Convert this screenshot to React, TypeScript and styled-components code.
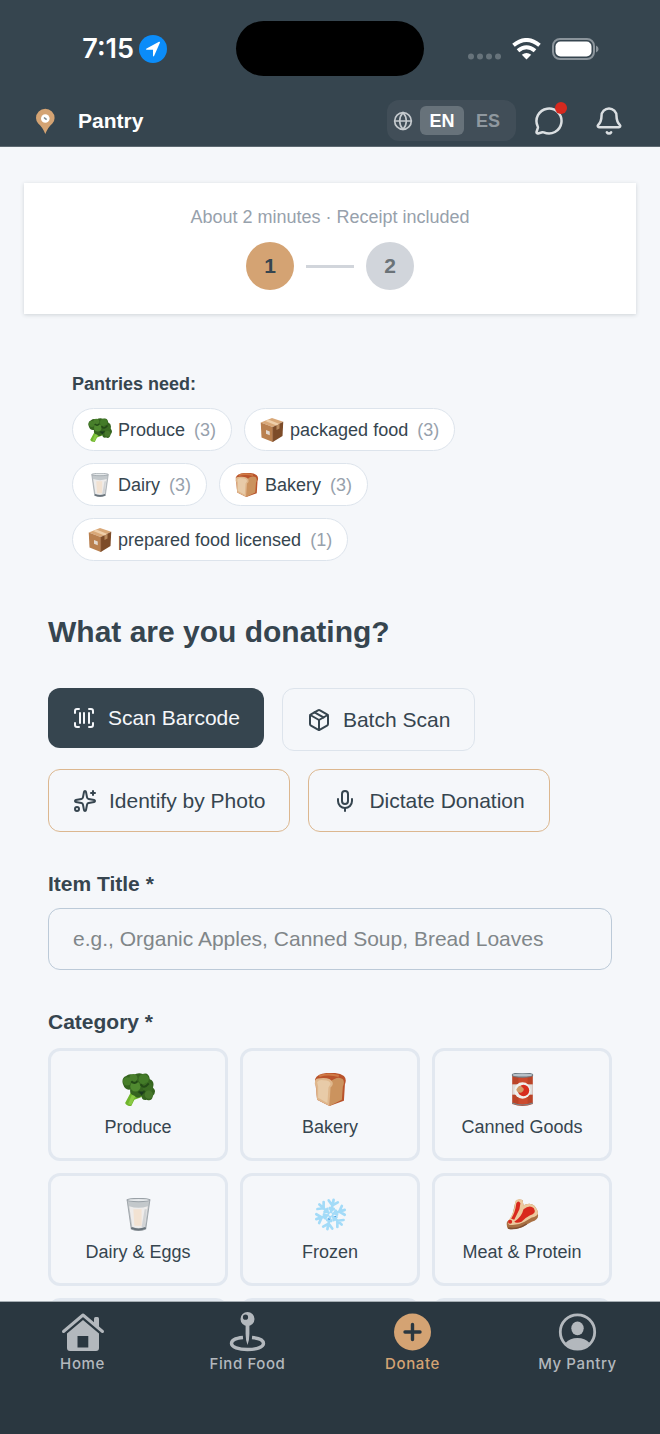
import React from "react";
import styled, { createGlobalStyle, css } from "styled-components";
import { Bell, Globe, MessageCircle, Mic, Package, ScanBarcode, Sparkles } from "lucide-react";

const color = {
  slate: "#36454f",
  slateDark: "#2a3740",
  page: "#f5f7fa",
  tan: "#d4a373",
  line: "#e2e8f0",
  muted: "#97a1ac",
  tab: "#b3b8bd",
};

const GlobalStyle = createGlobalStyle`
  *, *::before, *::after { box-sizing: border-box; }
  body {
    margin: 0;
    background: ${color.page};
    color: ${color.slate};
    font-family: "Liberation Sans", Arial, sans-serif;
    font-size: 18px;
  }
  button, input { font: inherit; color: inherit; }
  button { cursor: pointer; }
  svg { display: block; flex: none; }
`;

const Shell = styled.div`
  display: flex;
  flex-direction: column;
  height: 100vh;
  overflow: hidden;
`;

/* ---------- top bars ---------- */

const Top = styled.header`
  flex: none;
  background: ${color.slate};
  border-bottom: 1px solid #5d6971;
`;

const StatusBar = styled.div`
  display: grid;
  grid-template-columns: 1fr 188px 1fr;
  align-items: center;
  height: 97px;
`;

const StatusLeft = styled.div`
  display: flex;
  align-items: center;
  justify-content: flex-end;
  gap: 5px;
  padding-right: 69px;
  color: #fff;
  font: 600 27px/32px Inter, "Liberation Sans", sans-serif;
`;

const Island = styled.div`
  height: 55px;
  border-radius: 28px;
  background: #000;
`;

const StatusRight = styled.div`
  display: flex;
  align-items: center;
  gap: 11px;
  padding-left: 44px;
`;

const AppBar = styled.div`
  display: flex;
  align-items: center;
  height: 49px;
  padding: 0 30px 2px 24px;
`;

const AppName = styled.h1`
  flex: 1;
  margin: 0 0 0 12px;
  color: #fff;
  font-size: 21px;
  line-height: 28px;
`;

const LanguageSwitch = styled.div`
  display: flex;
  align-items: center;
  height: 41px;
  padding: 6px;
  border-radius: 12px;
  background: #414e58;
  color: #c5cace;
`;

const LanguageButton = styled.button<{ $active?: boolean }>`
  width: 44px;
  height: 29px;
  padding: 0;
  border: 0;
  border-radius: 6px;
  font-weight: 700;
  line-height: 28px;
  background: ${(p) => (p.$active ? "#67727a" : "transparent")};
  color: ${(p) => (p.$active ? "#fff" : "#8f989f")};
  &:first-of-type { margin: 0 2px 0 7px; }
`;

const IconButton = styled.button`
  position: relative;
  display: grid;
  place-items: center;
  width: 42px;
  height: 42px;
  padding: 0;
  border: 0;
  background: none;
  color: #dbdfe2;
  margin-left: 18px;
  ${LanguageSwitch} + & { margin-left: 12px; }
`;

const Badge = styled.span`
  position: absolute;
  top: 2px;
  right: 3px;
  width: 12px;
  height: 12px;
  border-radius: 50%;
  background: #d6291f;
`;

/* ---------- page ---------- */

const Main = styled.main`
  flex: 1;
  min-height: 0;
  overflow-y: auto;
  scrollbar-width: none;
  padding: 36px 24px 24px;
`;

const StepCard = styled.section`
  display: flex;
  flex-direction: column;
  align-items: center;
  gap: 15px;
  padding: 24px;
  background: #fff;
  box-shadow: 0 1px 4px rgba(54, 69, 79, 0.2);
`;

const StepNote = styled.p`
  margin: 0;
  line-height: 20px;
  color: ${color.muted};
`;

const Steps = styled.ol`
  display: flex;
  align-items: center;
  gap: 12px;
  margin: 0;
  padding: 0;
  list-style: none;
`;

const Step = styled.li<{ $active?: boolean }>`
  display: grid;
  place-items: center;
  width: 48px;
  height: 48px;
  border-radius: 50%;
  font-size: 21px;
  font-weight: 700;
  background: ${(p) => (p.$active ? color.tan : "#d1d5db")};
  color: ${(p) => (p.$active ? color.slate : "#6b7378")};
`;

const StepLine = styled.li`
  width: 48px;
  height: 3px;
  background: #d1d5db;
`;

const Needs = styled.section`
  margin: 60px 24px 0 48px;
`;

const NeedsTitle = styled.h2`
  margin: 0 0 14px;
  font-size: 18px;
  line-height: 20px;
`;

const Chips = styled.div`
  display: flex;
  flex-wrap: wrap;
  gap: 12px;
  max-width: 420px;
`;

const Chip = styled.button`
  display: flex;
  align-items: center;
  gap: 6px;
  height: 43px;
  padding: 0 15px;
  border: 1px solid #dde4ec;
  border-radius: 22px;
  background: #fff;
  line-height: 24px;
`;

const Count = styled.span`
  margin-left: 3px;
  color: ${color.muted};
`;

const Form = styled.form`
  margin: 53px 24px 0;
`;

const Question = styled.h2`
  margin: 0;
  font-size: 30px;
  line-height: 36px;
`;

const Actions = styled.div`
  display: flex;
  flex-wrap: wrap;
  align-items: flex-start;
  gap: 18px;
  margin-top: 38px;
`;

const outline = css<{ $border: string }>`
  border: 1px solid ${(p) => p.$border};
  background: transparent;
  color: ${color.slate};
  height: 63px;
`;

const ActionButton = styled.button<{ $border?: string }>`
  display: flex;
  align-items: center;
  gap: 12px;
  height: 60px;
  padding: 0 24px;
  border: 0;
  border-radius: 12px;
  background: ${color.slate};
  color: #f5f7fa;
  font-size: 21px;
  line-height: 28px;
  ${(p) => p.$border && outline}
`;

const Label = styled.label`
  display: block;
  margin: 38px 0 10px;
  font-size: 21px;
  font-weight: 700;
  line-height: 28px;
`;

const TextInput = styled.input`
  display: block;
  width: 100%;
  height: 62px;
  padding: 0 24px;
  border: 1px solid #bccad8;
  border-radius: 12px;
  background: transparent;
  font-size: 21px;
  &::placeholder { color: #808689; opacity: 1; }
`;

const Fieldset = styled.fieldset`
  margin: 38px 0 0;
  padding: 0;
  border: 0;
  min-width: 0;
`;

const Legend = styled.legend`
  padding: 0 0 12px;
  font-size: 21px;
  font-weight: 700;
  line-height: 28px;
`;

const Categories = styled.div`
  display: grid;
  grid-template-columns: repeat(3, 1fr);
  grid-auto-rows: 113px;
  gap: 12px;
`;

const Category = styled.button`
  display: flex;
  flex-direction: column;
  align-items: center;
  gap: 9px;
  padding: 22px 8px 0;
  border: 3px solid ${color.line};
  border-radius: 12px;
  background: transparent;
  line-height: 24px;
`;

const CategorySlot = styled.div`
  border: 3px solid ${color.line};
  border-radius: 12px;
`;

/* ---------- tab bar ---------- */

const TabBar = styled.nav`
  flex: none;
  display: grid;
  grid-template-columns: repeat(4, 1fr);
  height: 133px;
  padding-top: 9px;
  border-top: 1px solid #a5adb3;
  background: ${color.slateDark};
`;

const Tab = styled.a<{ $active?: boolean }>`
  display: flex;
  flex-direction: column;
  align-items: center;
  color: ${(p) => (p.$active ? color.tan : color.tab)};
  font: 500 15px/22px Inter, "Liberation Sans", sans-serif;
  letter-spacing: 0.6px;
  text-decoration: none;
`;

/* ---------- drawings ---------- */

type Art = { size: number };

const Broccoli = ({ size }: Art) => (
  <svg width={size} height={size} viewBox="0 0 32 32" aria-hidden="true">
    <path d="M9 18 3 29q1 3 6 3l3-6 8-3-5-8z" fill="#6fb52c" />
    <path d="m10 20-4 10 3 1 3-7 5-2z" fill="#8aca45" />
    <path d="M1 11Q-1 5 4 3 7 0 11 2q5-3 9-1 6-2 7 5 5 2 3 8 4 4 0 8-1 6-6 4-5 1-5-4-4 4-7 0-5-1-4-6-5 1-7-5z" fill="#35641f" />
    <circle cx="5" cy="8" r="4" fill="#477f2a" />
    <circle cx="11" cy="5" r="4" fill="#497f2c" />
    <circle cx="21" cy="6" r="5" fill="#437b28" />
    <circle cx="13" cy="13" r="5" fill="#508a30" />
    <circle cx="25" cy="14" r="5" fill="#3b6d23" />
    <circle cx="26" cy="21" r="4" fill="#47782b" />
    <path d="M9 8q3 3 6 0m3 3q3 5 8-1m-10 8q4 4 6-1" fill="none" stroke="#234a17" strokeWidth="2" />
    <path d="M17 18h4l-2 4z" fill="#1b3920" />
  </svg>
);

const Box = ({ size }: Art) => (
  <svg width={size} height={size} viewBox="0 0 32 32" aria-hidden="true">
    <path d="m1 6 15-6 15 5-14 7z" fill="#d9a878" />
    <path d="m1 6 16 6v20L2 26z" fill="#b9804f" />
    <path d="m31 5-14 7v20l13-8z" fill="#7d4c29" />
    <path d="m7 4 4-2 15 6-4 2z" fill="#efcfaa" />
    <path d="m22 10 4-2v6l-4 2z" fill="#b98a5e" />
    <path d="m8 16 5 2v5l-5-2z" fill="#e3d8cd" />
    <path d="M17 12v20" stroke="#96623a" />
  </svg>
);

const Milk = ({ size }: Art) => (
  <svg width={size} height={size} viewBox="0 0 32 32" aria-hidden="true">
    <path d="M5 2h22l-4 28q-7 3-14 0z" fill="#c3c8cb" stroke="#a1a7ac" />
    <path d="M7 8q9 3 18 0l-3 20q-6 2-12 0z" fill="#eeeceb" />
    <path d="M11 11h8v16h-7z" fill="#f2e2d2" />
    <path d="M22 11h2l-2 17h-3z" fill="#d1d3d5" />
    <ellipse cx="16" cy="2" rx="11" ry="1.6" fill="#e6e9eb" stroke="#9aa1a7" />
    <path d="M9 29q7 3 14 0" fill="none" stroke="#69737b" strokeWidth="2" />
  </svg>
);

const Bread = ({ size }: Art) => (
  <svg width={size} height={size} viewBox="0 0 32 32" aria-hidden="true">
    <path d="M1 6Q3 1 12 0q12-1 17 3 3 3 1 8l-1 16-14 5-12-6z" fill="#b9532b" />
    <path d="M15 9q8-7 13-3 2 3 0 7l-1 13-12 6z" fill="#cb935e" />
    <path d="M1 8q0-3 5-3 10-1 12 4 1 3-2 5l-1 18-12-6Q2 20 2 13 0 11 1 8z" fill="#dfb78c" />
    <path d="M3 9q2-3 6-2 7 0 7 4l-2 3-1 15-9-5V13z" fill="#e8cba8" />
    <path d="M5 3q9-3 19 0" fill="none" stroke="#cf7a45" strokeWidth="2" />
  </svg>
);

const Can = ({ size }: Art) => (
  <svg width={size} height={size} viewBox="0 0 32 32" aria-hidden="true">
    <path d="M6 2h20v28q-10 4-20 0z" fill="#bb4428" />
    <path d="M12 3h9v28h-9z" fill="#cc4a2e" />
    <path d="M6 11h20v10H6z" fill="#dedcd9" />
    <circle cx="16" cy="17" r="8" fill="#f0efec" />
    <circle cx="17" cy="17" r="5.5" fill="#d72c1e" />
    <path d="M10 16q3-6 6-2 3 2-1 5-4 1-5-3z" fill="#d29b67" />
    <ellipse cx="16" cy="2" rx="10" ry="2" fill="#b8c1c8" stroke="#6c7880" />
    <path d="M6 29q10 4 20 0" fill="none" stroke="#78868d" />
  </svg>
);

const Snowflake = ({ size }: Art) => (
  <svg width={size} height={size} viewBox="0 0 32 32" fill="none" aria-hidden="true">
    {[0, 60, 120, 180, 240, 300].map((angle) => (
      <g key={angle} transform={`rotate(${angle + 12} 16 16)`}>
        <path
          d="M16 13.5V1.500m-4.500 1.500 4.500 4 4.500-4m-6.500 7 2 2 2-2"
          stroke="#a3dbf8"
          strokeWidth="2.600"
          strokeLinecap="round"
          strokeLinejoin="round"
        />
      </g>
    ))}
    <path d="m14 20 1 1m5-3h1" stroke="#2f82e0" />
  </svg>
);

const Steak = ({ size }: Art) => (
  <svg width={size} height={size} viewBox="0 0 32 32" aria-hidden="true">
    <path d="M9 4q2-4 7-2l1 5q6-3 10 0 4 4 4 9 1 5-6 7l-7 4q-7 4-16 3-2-3-1-7 5-4 6-10z" fill="#a97043" />
    <path d="M9 3q2-3 7-1l1 5q6-3 10 0 4 4 4 8-1 3-6 4l-7 4q-7 4-15 3-2-2 0-5 4-6 5-11z" fill="#ecc99d" />
    <path d="M10 5q2-3 4 0l-1 6-5 10-3-1q4-6 5-15z" fill="#d9291d" />
    <path d="M17 11q6-5 10-1 3 5-4 7-4 2-8 6-5 2-7 0 7-4 9-12z" fill="#d9291d" />
    <circle cx="4" cy="23" r="2" fill="#d9291d" />
    <path d="M2 29q9 2 18-4" fill="none" stroke="#815033" strokeWidth="1.400" />
  </svg>
);

const LocationArrow = () => (
  <svg width="28" height="28" viewBox="0 0 28 28" aria-hidden="true">
    <circle cx="14" cy="14" r="14" fill="#0b8cf9" />
    <path d="M20 6.800q1.300-.3.900 1l-5.600 12.800q-.9 1.800-1.300 0V14.700H7.800q-1.800-.3-.2-1.300z" fill="#fff" />
  </svg>
);

const Signal = () => (
  <svg width="33" height="28" viewBox="0 0 33 28" fill="#67737b" aria-hidden="true">
    {[3, 12, 21, 30].map((x) => (
      <circle key={x} cx={x} cy="21.500" r="3" />
    ))}
  </svg>
);

const Wifi = () => (
  <svg width="29" height="22" viewBox="0 0 29 22" fill="none" stroke="#fff" strokeWidth="4" aria-hidden="true">
    <path d="M1.500 7.300q13-10.600 26 0M6 12.800q8.500-7.200 17 0" />
    <path d="M14.500 21.600 9.800 16.800q4.700-3.600 9.400 0z" fill="#fff" stroke="none" />
  </svg>
);

const Battery = () => (
  <svg width="47" height="22" viewBox="0 0 47 22" aria-hidden="true">
    <rect x="1" y="1" width="41" height="20" rx="7" fill="none" stroke="#8b949b" strokeWidth="2" />
    <rect x="3.500" y="3.500" width="36" height="15" rx="5" fill="#fff" />
    <path d="M44 7.500q2.600 1 2.600 3.500T44 14.500z" fill="#8b949b" />
  </svg>
);

const PinLogo = () => (
  <svg width="42" height="28" viewBox="0 0 42 28" aria-hidden="true">
    <path d="M21.300 27Q18.500 20 14.200 16.500 12 14 12 11a9.300 9.300 0 0 1 18.600 0q0 3-2.200 5.500Q24.100 20 21.300 27z" fill="#d4a373" />
    <circle cx="21.300" cy="11.500" r="4.300" fill="#fff" />
    <path d="m20 10.500 2.600 2.200" stroke="#7c878c" strokeWidth="1.600" />
  </svg>
);

const HomeIcon = () => (
  <svg width="44" height="42" viewBox="0 0 44 42" fill="currentColor" aria-hidden="true">
    <path d="M2.500 20.500 22 4l19.500 16.500" fill="none" stroke="currentColor" strokeWidth="3" strokeLinecap="round" strokeLinejoin="round" />
    <path d="M33 7.500Q33 6 34.500 6h2Q38 6 38 7.500V17l-5-4z" />
    <path fillRule="evenodd" d="M22 9 38 22.500V37q0 3-3 3H9q-3 0-3-3V22.500zM16.500 25v11.500h10.800V25z" />
  </svg>
);

const FindIcon = () => (
  <svg width="44" height="42" viewBox="0 0 44 42" fill="currentColor" aria-hidden="true">
    <path fillRule="evenodd" d="M21.500 1a7 7 0 1 0 0 14 7 7 0 0 0 0-14zm-2 2.600a2.600 2.600 0 1 1 0 5.200 2.600 2.600 0 0 1 0-5.200z" />
    <path d="M19.600 14h3.800v9q0 6-1.900 11-1.900-5-1.900-11z" />
    <path d="M17 26.500Q5.500 27.500 5.500 32.500C5.500 36 12.500 38.500 21.500 38.500s16-2.500 16-6q0-5-11.500-6" fill="none" stroke="currentColor" strokeWidth="3.400" />
  </svg>
);

const DonateIcon = () => (
  <svg width="44" height="42" viewBox="0 0 44 42" aria-hidden="true">
    <circle cx="21.500" cy="21" r="18.500" fill="currentColor" />
    <path d="M21.500 13.500v15m-7.500-7.500h15" stroke={color.slateDark} strokeWidth="3.400" strokeLinecap="round" />
  </svg>
);

const ProfileIcon = () => (
  <svg width="44" height="42" viewBox="0 0 44 42" fill="currentColor" aria-hidden="true">
    <circle cx="21.500" cy="21" r="17.200" fill="none" stroke="currentColor" strokeWidth="2.800" />
    <ellipse cx="21.500" cy="17.300" rx="6.200" ry="6.900" />
    <path d="M9.500 32q4.500-5 12-5t12 5q-5 6-12 6t-12-6z" />
  </svg>
);

/* ---------- data ---------- */

const needs = [
  { name: "Produce", count: 3, Icon: Broccoli },
  { name: "packaged food", count: 3, Icon: Box },
  { name: "Dairy", count: 3, Icon: Milk },
  { name: "Bakery", count: 3, Icon: Bread },
  { name: "prepared food licensed", count: 1, Icon: Box },
];

const categories = [
  { name: "Produce", Icon: Broccoli },
  { name: "Bakery", Icon: Bread },
  { name: "Canned Goods", Icon: Can },
  { name: "Dairy & Eggs", Icon: Milk },
  { name: "Frozen", Icon: Snowflake },
  { name: "Meat & Protein", Icon: Steak },
];

const actions = [
  { name: "Scan Barcode", Icon: ScanBarcode },
  { name: "Batch Scan", Icon: Package, border: "#dde4ec" },
  { name: "Identify by Photo", Icon: Sparkles, border: "#dcb78f" },
  { name: "Dictate Donation", Icon: Mic, border: "#dcb78f" },
];

const tabs = [
  { name: "Home", Icon: HomeIcon },
  { name: "Find Food", Icon: FindIcon },
  { name: "Donate", Icon: DonateIcon, active: true },
  { name: "My Pantry", Icon: ProfileIcon },
];

export default function App() {
  return (
    <Shell>
      <GlobalStyle />
      <Top>
        <StatusBar>
          <StatusLeft>
            7:15
            <LocationArrow />
          </StatusLeft>
          <Island />
          <StatusRight>
            <Signal />
            <Wifi />
            <Battery />
          </StatusRight>
        </StatusBar>
        <AppBar>
          <PinLogo />
          <AppName>Pantry</AppName>
          <LanguageSwitch>
            <Globe size={20} strokeWidth={2} />
            <LanguageButton $active>EN</LanguageButton>
            <LanguageButton>ES</LanguageButton>
          </LanguageSwitch>
          <IconButton aria-label="Messages">
            <MessageCircle size={30} />
            <Badge />
          </IconButton>
          <IconButton aria-label="Notifications">
            <Bell size={30} />
          </IconButton>
        </AppBar>
      </Top>

      <Main>
        <StepCard>
          <StepNote>About 2 minutes · Receipt included</StepNote>
          <Steps>
            <Step $active aria-current="step">1</Step>
            <StepLine aria-hidden="true" />
            <Step>2</Step>
          </Steps>
        </StepCard>

        <Needs>
          <NeedsTitle>Pantries need:</NeedsTitle>
          <Chips>
            {needs.map(({ name, count, Icon }) => (
              <Chip key={name} type="button">
                <Icon size={24} />
                {name}
                <Count>({count})</Count>
              </Chip>
            ))}
          </Chips>
        </Needs>

        <Form>
          <Question>What are you donating?</Question>
          <Actions>
            {actions.map(({ name, Icon, border }) => (
              <ActionButton key={name} type="button" $border={border}>
                <Icon size={24} />
                {name}
              </ActionButton>
            ))}
          </Actions>

          <Label htmlFor="item-title">Item Title *</Label>
          <TextInput id="item-title" placeholder="e.g., Organic Apples, Canned Soup, Bread Loaves" />

          <Fieldset>
            <Legend>Category *</Legend>
            <Categories>
              {categories.map(({ name, Icon }) => (
                <Category key={name} type="button">
                  <Icon size={33} />
                  {name}
                </Category>
              ))}
              <CategorySlot />
              <CategorySlot />
              <CategorySlot />
            </Categories>
          </Fieldset>
        </Form>
      </Main>

      <TabBar>
        {tabs.map(({ name, Icon, active }) => (
          <Tab key={name} href="#" $active={active} aria-current={active ? "page" : undefined}>
            <Icon />
            {name}
          </Tab>
        ))}
      </TabBar>
    </Shell>
  );
}
